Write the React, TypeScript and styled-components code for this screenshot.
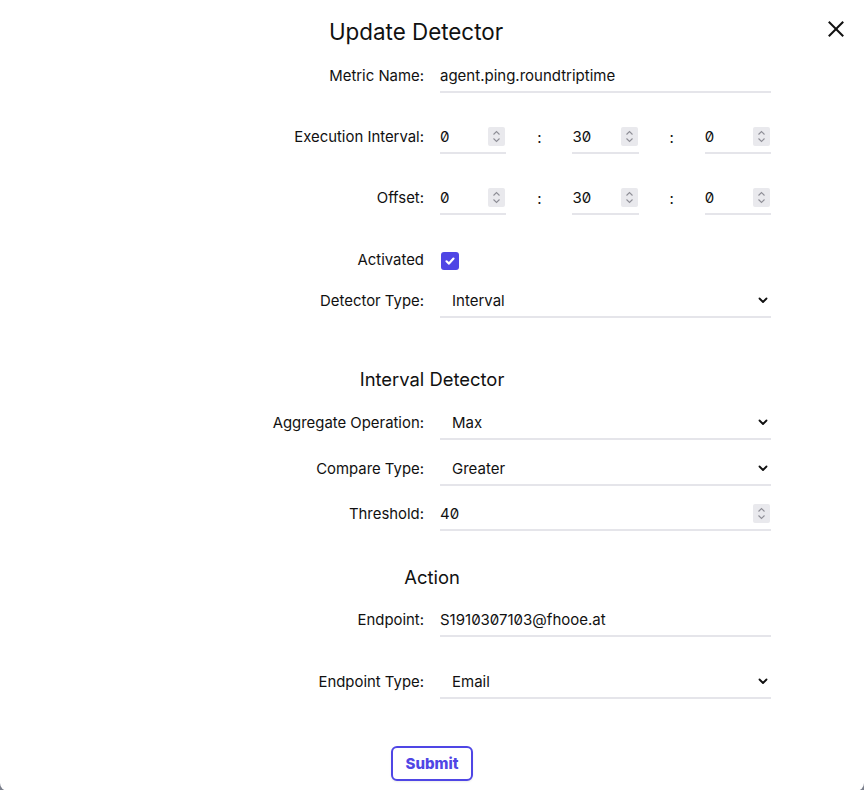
import React from "react";
import styled, { createGlobalStyle } from "styled-components";

const Global = createGlobalStyle`
  html, body { margin: 0; padding: 0; overflow: hidden; background: #7b7f8c; }
  body {
    font-family: Inter, "Noto Sans", sans-serif;
    font-feature-settings: "zero" 1;
    -webkit-font-smoothing: antialiased;
  }
  * { box-sizing: border-box; }
`;

const Modal = styled.div`
  position: relative;
  width: 864px;
  height: 791px;
  background: #fff;
  border-radius: 0 0 8px 8px;
  padding-top: 18px;
  display: flex;
  flex-direction: column;
  color: #111;
`;

const Title = styled.h2`
  margin: 0;
  height: 28px;
  line-height: 28px;
  font-size: 22.4px;
  font-weight: 400;
  text-align: center;
  padding-right: 32px;
`;

const Close = styled.button`
  position: absolute;
  top: 18px;
  right: 16px;
  width: 24px;
  height: 22px;
  padding: 0;
  border: 0;
  background: none;
  display: flex;
  align-items: center;
  justify-content: center;
  cursor: pointer;
`;

const Row = styled.div<{ $mt: number }>`
  margin-top: ${(p) => p.$mt}px;
  display: grid;
  grid-template-columns: 424px 331px;
  column-gap: 16px;
  height: 34px;
  align-items: center;
`;

const Label = styled.label`
  text-align: right;
  font-size: 14.9px;
  line-height: 20px;
  color: #111;
`;

const Heading = styled.h3<{ $mt: number }>`
  margin: ${(p) => p.$mt}px 0 0;
  height: 28px;
  line-height: 28px;
  font-size: 18.4px;
  font-weight: 400;
  text-align: center;
`;

const Field = styled.div`
  display: flex;
  align-items: center;
  min-width: 0;
  height: 34px;
  border-bottom: 2px solid #e5e5ea;
  font-size: 15px;
`;

const TextInput = styled.input`
  flex: 1;
  width: 0;
  min-width: 0;
  border: 0;
  outline: none;
  padding: 0;
  background: transparent;
  font: inherit;
  font-size: 15px;
  font-feature-settings: "zero" 1;
  color: #111;
  height: 32px;
`;

const Spinner = styled.span`
  flex: none;
  width: 17px;
  height: 19px;
  margin-right: 1px;
  background: #e9e9ed;
  border-radius: 2px;
  display: flex;
  align-items: center;
  justify-content: center;
`;

const TimeGrid = styled.div`
  display: grid;
  grid-template-columns: repeat(5, minmax(0, 1fr));
  align-items: center;
`;

const Colon = styled.span`
  text-align: center;
  font-size: 15px;
`;

const SelectBox = styled.div`
  display: flex;
  align-items: center;
  justify-content: space-between;
  height: 34px;
  padding: 0 2px 0 12px;
  border-bottom: 2px solid #e5e5ea;
  font-size: 15px;
`;

const CheckBox = styled.span`
  width: 18px;
  height: 18px;
  margin-left: 1px;
  margin-top: 1px;
  border-radius: 3px;
  background: #4f46e5;
  display: flex;
  align-items: center;
  justify-content: center;
`;

const Footer = styled.div`
  margin-top: 47px;
  display: flex;
  justify-content: center;
`;

const SubmitButton = styled.button`
  width: 82px;
  height: 35px;
  border: 2px solid #4f46e5;
  border-radius: 6px;
  background: #fff;
  color: #4f46e5;
  font-family: Inter, "Noto Sans", sans-serif;
  font-weight: 800;
  font-size: 15px;
  box-shadow: 0 1px 2px rgba(0, 0, 0, 0.08);
  cursor: pointer;
`;

const SpinIcon = () => (
  <Spinner>
    <svg width="9" height="15" viewBox="0 0 9 15" fill="none" stroke="#8e8e96" strokeWidth="1.1">
      <polyline points="1.5,5.5 4.5,2.5 7.5,5.5" />
      <polyline points="1.5,9.5 4.5,12.5 7.5,9.5" />
    </svg>
  </Spinner>
);

const NumberField = ({ value }: { value: string }) => (
  <Field>
    <TextInput value={value} readOnly />
    <SpinIcon />
  </Field>
);

const Chevron = () => (
  <svg width="12" height="12" viewBox="0 0 12 12" fill="none" stroke="#111" strokeWidth="1.8" strokeLinecap="round" strokeLinejoin="round">
    <polyline points="2.5,4.5 6,8 9.5,4.5" />
  </svg>
);

const Select = ({ value }: { value: string }) => (
  <SelectBox>
    <span>{value}</span>
    <Chevron />
  </SelectBox>
);

const TimeRow = ({ values }: { values: [string, string, string] }) => (
  <TimeGrid>
    <NumberField value={values[0]} />
    <Colon>:</Colon>
    <NumberField value={values[1]} />
    <Colon>:</Colon>
    <NumberField value={values[2]} />
  </TimeGrid>
);

export default function App() {
  return (
    <>
      <Global />
      <Modal>
        <Title>Update Detector</Title>
        <Close aria-label="Close">
          <svg width="16" height="16" viewBox="0 0 16 16" stroke="#111" strokeWidth="2" strokeLinecap="square">
            <line x1="1.5" y1="1.5" x2="14.5" y2="14.5" />
            <line x1="14.5" y1="1.5" x2="1.5" y2="14.5" />
          </svg>
        </Close>

        <Row $mt={13}>
          <Label>Metric Name:</Label>
          <Field>
            <TextInput value="agent.ping.roundtriptime" readOnly />
          </Field>
        </Row>
        <Row $mt={27}>
          <Label>Execution Interval:</Label>
          <TimeRow values={["0", "30", "0"]} />
        </Row>
        <Row $mt={27}>
          <Label>Offset:</Label>
          <TimeRow values={["0", "30", "0"]} />
        </Row>
        <Row $mt={28}>
          <Label>Activated</Label>
          <CheckBox>
            <svg width="12" height="12" viewBox="0 0 12 12" fill="none" stroke="#fff" strokeWidth="2.2" strokeLinecap="round" strokeLinejoin="round">
              <polyline points="2.5,6.3 5,8.6 9.5,3.6" />
            </svg>
          </CheckBox>
        </Row>
        <Row $mt={7}>
          <Label>Detector Type:</Label>
          <Select value="Interval" />
        </Row>

        <Heading $mt={47}>Interval Detector</Heading>
        <Row $mt={13}>
          <Label>Aggregate Operation:</Label>
          <Select value="Max" />
        </Row>
        <Row $mt={12}>
          <Label>Compare Type:</Label>
          <Select value="Greater" />
        </Row>
        <Row $mt={11}>
          <Label>Threshold:</Label>
          <Field>
            <TextInput value="40" readOnly />
            <SpinIcon />
          </Field>
        </Row>

        <Heading $mt={32}>Action</Heading>
        <Row $mt={12}>
          <Label>Endpoint:</Label>
          <Field>
            <TextInput value="S1910307103@fhooe.at" readOnly />
          </Field>
        </Row>
        <Row $mt={28}>
          <Label>Endpoint Type:</Label>
          <Select value="Email" />
        </Row>

        <Footer>
          <SubmitButton>Submit</SubmitButton>
        </Footer>
      </Modal>
    </>
  );
}
